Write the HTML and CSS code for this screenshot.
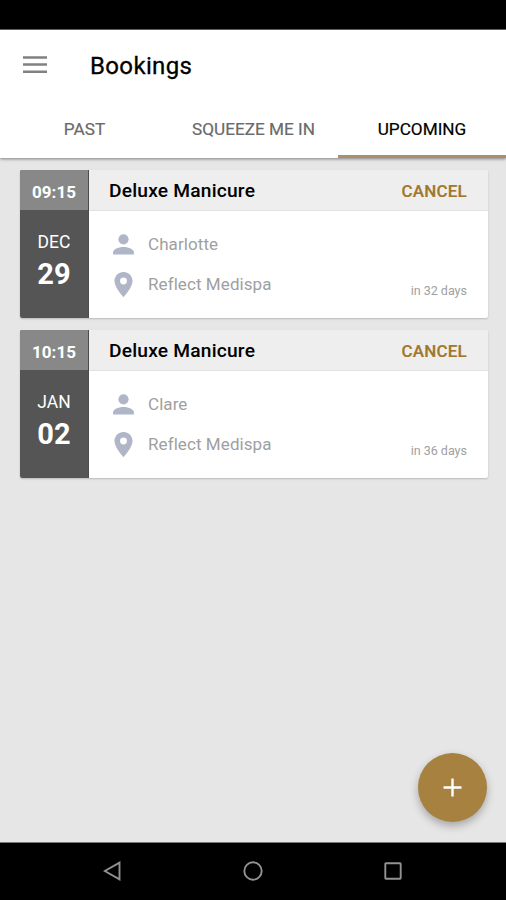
FILE: index.html
```html
<!DOCTYPE html>
<html lang="en">
<head>
<meta charset="utf-8">
<title>Bookings</title>
<link rel="stylesheet" href="styles.css">
</head>
<body>
<div class="screen">
  <div class="status-bar"></div>
  <header class="header">
    <div class="toolbar">
      <svg class="menu-icon" width="24" height="18" viewBox="0 0 24 18"><path d="M0 1.500h24M0 8.600h24M0 15.700h24" stroke="#818181" stroke-width="2.500"/></svg>
      <h1 class="title">Bookings</h1>
    </div>
    <nav class="tabs">
      <a class="tab">PAST</a>
      <a class="tab">SQUEEZE ME IN</a>
      <a class="tab tab-active">UPCOMING</a>
    </nav>
  </header>
  <main class="list">
    <article class="card">
      <div class="date">
        <div class="time">09:15</div>
        <div class="month">DEC</div>
        <div class="day">29</div>
      </div>
      <div class="details">
        <div class="card-head"><h2 class="service">Deluxe Manicure</h2><a class="cancel">CANCEL</a></div>
        <div class="card-body">
          <div class="info">
            <div class="row"><svg class="icon" viewBox="0 0 24 24"><circle cx="12" cy="7" r="4.900"/><path d="M2 21.500v-2c0-3.600 6.600-5.200 10-5.200s10 1.600 10 5.200v2z"/></svg><span>Charlotte</span></div>
            <div class="row"><svg class="icon" viewBox="0 0 24 24"><path fill-rule="evenodd" d="M12 0c-4.800 0-8.700 3.800-8.700 8.600C3.300 15 12 24 12 24s8.700-9 8.700-15.400C20.700 3.800 16.800 0 12 0zm0 11.900a3.300 3.300 0 1 1 0-6.600 3.300 3.300 0 0 1 0 6.600z"/></svg><span>Reflect Medispa</span></div>
          </div>
          <div class="due">in 32 days</div>
        </div>
      </div>
    </article>
    <article class="card">
      <div class="date">
        <div class="time">10:15</div>
        <div class="month">JAN</div>
        <div class="day">02</div>
      </div>
      <div class="details">
        <div class="card-head"><h2 class="service">Deluxe Manicure</h2><a class="cancel">CANCEL</a></div>
        <div class="card-body">
          <div class="info">
            <div class="row"><svg class="icon" viewBox="0 0 24 24"><circle cx="12" cy="7" r="4.900"/><path d="M2 21.500v-2c0-3.600 6.600-5.200 10-5.200s10 1.600 10 5.200v2z"/></svg><span>Clare</span></div>
            <div class="row"><svg class="icon" viewBox="0 0 24 24"><path fill-rule="evenodd" d="M12 0c-4.800 0-8.700 3.800-8.700 8.600C3.300 15 12 24 12 24s8.700-9 8.700-15.400C20.700 3.800 16.800 0 12 0zm0 11.900a3.300 3.300 0 1 1 0-6.600 3.300 3.300 0 0 1 0 6.600z"/></svg><span>Reflect Medispa</span></div>
          </div>
          <div class="due">in 36 days</div>
        </div>
      </div>
    </article>
    <button class="fab" aria-label="Add booking"><svg width="20" height="20" viewBox="0 0 20 20"><path d="M9.500 .5v18M.5 9.500h18" stroke="#fff" stroke-width="2.400"/></svg></button>
  </main>
  <nav class="nav-bar">
    <svg class="nav-icon" viewBox="0 0 20 20"><path d="M16.500 1.600v16.800L1.800 10z"/></svg>
    <svg class="nav-icon" viewBox="0 0 20 20"><circle cx="10" cy="10" r="8.700"/></svg>
    <svg class="nav-icon" viewBox="0 0 20 20"><rect x="2.300" y="2.300" width="15.400" height="15.400" rx=".6"/></svg>
  </nav>
</div>
</body>
</html>
```
FILE: styles.css
```css
* { box-sizing: border-box; }
body { margin: 0; font-family: Roboto, sans-serif; color: #111; }
h1, h2 { margin: 0; font-weight: 500; }
.screen { width: 506px; height: 900px; display: flex; flex-direction: column; background: #e6e6e6; overflow: hidden; }
.status-bar { height: 30px; background: #000; border-bottom: 1px solid #666; flex: none; }
.header { height: 128px; flex: none; background: #fff; box-shadow: 0 1px 3px rgba(0,0,0,.45); position: relative; display: flex; flex-direction: column; }
.toolbar { height: 70px; display: flex; align-items: center; padding-left: 23px; }
.menu-icon { display: block; }
.title { margin-left: 43px; padding-top: 2px; font-size: 24px; font-weight: 400; letter-spacing: .35px; line-height: 30px; color: #000; -webkit-text-stroke: .3px #000; }
.tabs { flex: 1; display: grid; grid-template-columns: 169px 169px 168px; }
.tab { display: flex; align-items: center; justify-content: center; padding-top: 2px; font-size: 17.200px; color: #6a6a6a; border-bottom: 3px solid transparent; -webkit-text-stroke: .2px currentColor; }
.tab-active { color: #000; border-bottom-color: #ab8f6c; }
.list { flex: 1; padding: 12px 18px 0 20px; display: flex; flex-direction: column; gap: 12px; position: relative; }
.card { height: 148px; flex: none; display: flex; background: #fff; border-radius: 2px; overflow: hidden; box-shadow: 0 1px 2px rgba(0,0,0,.2); }
.date { width: 69px; background: #555; color: #fff; text-align: center; border-right: 1px solid #4c4c4c; }
.time { height: 40px; padding-top: 3px; line-height: 38px; background: #888; font-size: 17px; font-weight: 700; letter-spacing: 0; }
.month { margin-top: 22px; line-height: 20px; font-size: 17.500px; }
.day { margin-top: 5px; line-height: 34px; font-size: 29px; font-weight: 700; }
.details { flex: 1; display: flex; flex-direction: column; }
.card-head { height: 41px; display: flex; align-items: center; justify-content: space-between; padding: 1px 21px 0 20px; background: #eee; border-bottom: 1px solid #e2e2e2; }
.service { font-size: 19.200px; letter-spacing: .2px; color: #000; }
.cancel { font-size: 17px; font-weight: 500; letter-spacing: .2px; color: #a2772b; -webkit-text-stroke: .2px #a2772b; }
.card-body { flex: 1; display: flex; justify-content: space-between; align-items: flex-end; padding: 13px 21px 13px 22px; }
.info { align-self: flex-start; }
.row { height: 40px; display: flex; align-items: center; gap: 12px; font-size: 17px; letter-spacing: .08px; color: #a0a0a0; }
.icon { width: 25px; height: 25px; fill: #b0b6c7; }
.due { font-size: 12.500px; line-height: 28px; color: #a0a0a0; }
.fab { position: absolute; right: 19px; bottom: 20px; width: 69px; height: 69px; padding: 0; border: 0; border-radius: 50%; background: #a68140; display: grid; place-items: center; box-shadow: 0 4px 8px rgba(0,0,0,.28); }
.nav-bar { height: 58px; flex: none; padding: 0 0 2px; background: #000; border-top: 1px solid #777; display: flex; justify-content: center; align-items: center; gap: 120px; }
.nav-icon { width: 20px; height: 20px; fill: none; stroke: #929292; stroke-width: 1.900; }
```
